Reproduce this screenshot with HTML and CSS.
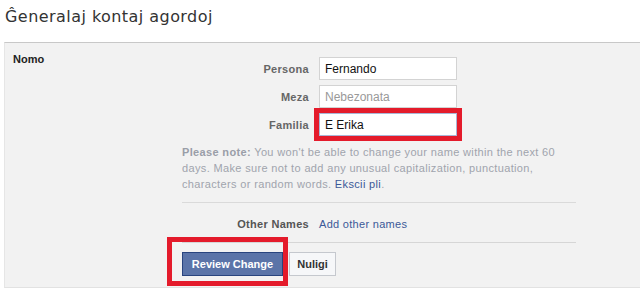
FILE: index.html
```
<!DOCTYPE html>
<html lang="eo">
<head>
  <meta charset="UTF-8" />
  <title>Ĝeneralaj kontaj agordoj</title>
  <link rel="stylesheet" href="styles.css">
</head>
<body>

  <h1 class="page-title">Ĝeneralaj kontaj agordoj</h1>

  <div class="settings-panel">
    <div class="section-label">Nomo</div>

    <div class="section-body">
      <div class="name-fields">
        <label for="first">Persona</label>
        <input type="text" id="first" value="Fernando" />

        <label for="middle">Meza</label>
        <input type="text" id="middle" placeholder="Nebezonata" />

        <label for="last">Familia</label>
        <input type="text" id="last" class="marked" value="E Erika" />
      </div>

      <p class="note">
        <b>Please note:</b> You won't be able to change your name within the next 60
        days. Make sure not to add any unusual capitalization, punctuation,
        characters or random words. <a href="#">Ekscii pli</a>.
      </p>

      <div class="other-names">
        <span class="row-label">Other Names</span>
        <a href="#">Add other names</a>
      </div>

      <div class="actions">
        <span class="marked-box">
          <button class="btn-primary">Review Change</button>
        </span>
        <button class="btn-plain">Nuligi</button>
      </div>
    </div>
  </div>

</body>
</html>
```

FILE: styles.css
```
body {
  margin: 0;
  background: #fff;
  font-family: "Liberation Sans", Arial, sans-serif;
  font-size: 11px;
  color: #333;
}

.page-title {
  margin: 0;
  padding: 7px 0 0 5px;
  height: 42px;
  box-sizing: border-box;
  font-family: "DejaVu Sans", sans-serif;
  font-size: 16px;
  font-weight: normal;
  letter-spacing: 0.45px;
  color: #333;
}

.settings-panel {
  margin-left: 4px;
  background: #f2f2f2;
  border-top: 1px solid #c8c8c8;
  border-left: 1px solid #e6e6e6;
  border-bottom: 1px solid #e2e2e2;
  display: flex;
  padding: 9px 0 0 8px;
  height: 246px;
  box-sizing: border-box;
}

.section-label {
  width: 169px;
  font-weight: bold;
  color: #222;
  line-height: 14px;
}

.section-body {
  width: 394px;
  padding-top: 5px;
}

.name-fields {
  display: grid;
  grid-template-columns: 127px 138px;
  grid-auto-rows: 23px;
  column-gap: 10px;
  row-gap: 5px;
  align-items: center;
}

.name-fields label {
  text-align: right;
  font-weight: bold;
  color: #666;
  letter-spacing: 0.3px;
}

.name-fields input {
  height: 23px;
  box-sizing: border-box;
  border: 1px solid #d3d3d3;
  padding: 0 5px;
  font-family: "Liberation Sans", Arial, sans-serif;
  font-size: 12px;
  color: #111;
  background: #fff;
}

.name-fields input::placeholder {
  color: #999;
}

.name-fields input.marked {
  border-color: #a9b6d6;
  outline: 5px solid #e41b2b;
  outline-offset: 0;
}

.note {
  margin: 8px 0 0;
  padding-bottom: 10px;
  border-bottom: 1px solid #dadada;
  line-height: 16px;
  color: #a0a4ad;
  letter-spacing: 0.35px;
}

.note b {
  color: #9a9ea8;
}

a {
  color: #3b5998;
  text-decoration: none;
}

.other-names {
  display: grid;
  grid-template-columns: 127px auto;
  column-gap: 10px;
  align-items: center;
  height: 40px;
  padding-top: 2px;
  box-sizing: border-box;
  border-bottom: 1px solid #d6d6d6;
  letter-spacing: 0.3px;
}

.row-label {
  text-align: right;
  font-weight: bold;
  color: #555;
}

.actions {
  display: flex;
  gap: 6px;
  padding-top: 9px;
}

.marked-box {
  position: relative;
}

.marked-box::after {
  content: "";
  position: absolute;
  left: -15px;
  top: -15px;
  right: -5px;
  bottom: -10px;
  border: 5px solid #e41b2b;
}

.actions button {
  height: 24px;
  font-family: "Liberation Sans", Arial, sans-serif;
  font-size: 11px;
  font-weight: bold;
  padding: 0 6px;
  cursor: pointer;
}

.btn-primary {
  width: 101px;
  background: #5b74a8;
  border: 1px solid #29447e;
  color: #fff;
}

.btn-plain {
  width: 47px;
  background: #f6f7f9;
  border: 1px solid #c5c8ce;
  color: #333;
}
```
